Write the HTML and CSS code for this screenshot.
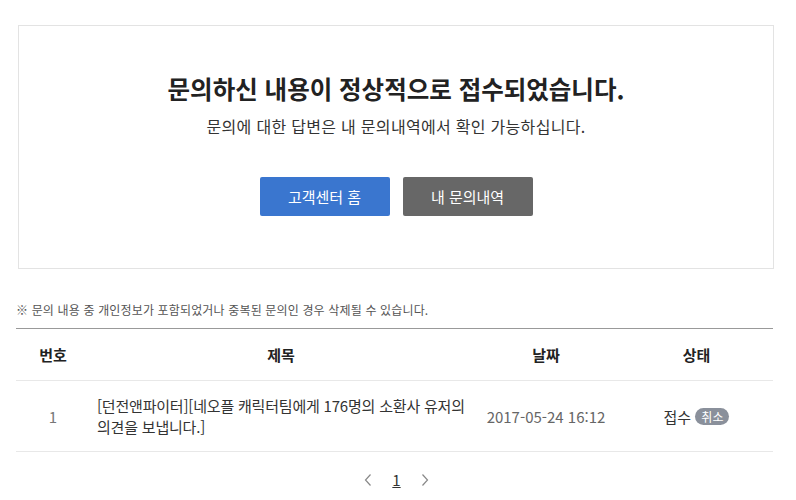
FILE: index.html
```html
<!DOCTYPE html>
<html lang="ko">
<head>
  <meta charset="UTF-8">
  <title>문의 접수 완료</title>
  <link rel="stylesheet" href="styles.css">
</head>
<body>
  <div class="wrap">
    <div class="done-box">
      <h2>문의하신 내용이 정상적으로 접수되었습니다.</h2>
      <p>문의에 대한 답변은 내 문의내역에서 확인 가능하십니다.</p>
      <div class="btns">
        <a class="btn btn-blue" href="#">고객센터 홈</a>
        <a class="btn btn-gray" href="#">내 문의내역</a>
      </div>
    </div>

    <p class="notice">※ 문의 내용 중 개인정보가 포함되었거나 중복된 문의인 경우 삭제될 수 있습니다.</p>

    <table class="list">
      <colgroup>
        <col class="c-num">
        <col class="c-title">
        <col class="c-date">
        <col class="c-state">
      </colgroup>
      <thead>
        <tr>
          <th>번호</th>
          <th>제목</th>
          <th>날짜</th>
          <th>상태</th>
        </tr>
      </thead>
      <tbody>
        <tr>
          <td class="num">1</td>
          <td class="subject">[던전앤파이터][네오플 캐릭터팀에게 176명의 소환사 유저의 의견을 보냅니다.]</td>
          <td class="date">2017-05-24 16:12</td>
          <td class="state">접수 <span class="badge">취소</span></td>
        </tr>
      </tbody>
    </table>

    <div class="paging">
      <a class="arrow" href="#"><svg width="8" height="12" viewBox="0 0 8 12"><path d="M6.5 0.5 L1.5 6 L6.5 11.5" fill="none" stroke="#888" stroke-width="1.2"/></svg></a>
      <a class="page on" href="#">1</a>
      <a class="arrow" href="#"><svg width="8" height="12" viewBox="0 0 8 12"><path d="M1.5 0.5 L6.5 6 L1.5 11.5" fill="none" stroke="#888" stroke-width="1.2"/></svg></a>
    </div>
  </div>
</body>
</html>
```

FILE: styles.css
```css
body {
  margin: 0;
  font-family: "Noto Sans CJK KR", "Noto Sans", sans-serif;
  color: #333;
  background: #fff;
}
.wrap {
  width: 757px;
  padding: 25px 0 0 16px;
}
.done-box {
  margin: 0 -1px 0 2px;
  border: 1px solid #e3e3e3;
  padding: 46px 0 52px;
  text-align: center;
}
.done-box h2 {
  margin: 0;
  font-size: 24.5px;
  line-height: 34px;
  font-weight: bold;
  color: #222;
}
.done-box p {
  margin: 9px 0 0;
  font-size: 16px;
  letter-spacing: 0.3px;
  line-height: 22px;
  color: #333;
}
.btns {
  margin-top: 40px;
  display: flex;
  justify-content: center;
  gap: 13px;
}
.btn {
  width: 130px;
  height: 39px;
  line-height: 39px;
  border-radius: 2px;
  color: #fff;
  font-size: 15px;
  text-decoration: none;
}
.btn-blue {
  background: #3a76cf;
}
.btn-gray {
  background: #676767;
}
.notice {
  margin: 32px 0 9px;
  font-size: 12px;
  letter-spacing: 0.15px;
  line-height: 18px;
  color: #555;
}
.list {
  width: 757px;
  border-collapse: collapse;
  border-top: 1px solid #999;
}
.c-num { width: 74px; }
.c-title { width: 382px; }
.c-date { width: 148px; }
.c-state { width: 153px; }
.list th {
  height: 49px;
  font-size: 15px;
  font-weight: bold;
  color: #222;
  border-bottom: 1px solid #e8e8e8;
}
.list td {
  height: 68px;
  font-size: 15px;
  text-align: center;
  border-bottom: 1px solid #e8e8e8;
}
.list td.num {
  color: #777;
}
.list td.subject {
  text-align: left;
  padding: 0 0 0 7px;
  line-height: 21px;
  letter-spacing: -0.2px;
  word-break: keep-all;
  color: #333;
}
.list td.date {
  color: #666;
}
.badge {
  display: inline-block;
  height: 17px;
  line-height: 17px;
  padding: 0 6px;
  border-radius: 9px;
  background: #8a909b;
  color: #fff;
  font-size: 12px;
  vertical-align: 1px;
}
.paging {
  display: flex;
  justify-content: center;
  align-items: center;
  gap: 20px;
  margin-top: 17px;
  padding-left: 4px;
  font-size: 15px;
  line-height: 22px;
}
.paging a {
  color: #666;
  text-decoration: none;
}
.paging .arrow {
  display: flex;
}
.paging .on {
  color: #333;
  text-decoration: underline;
}
```
